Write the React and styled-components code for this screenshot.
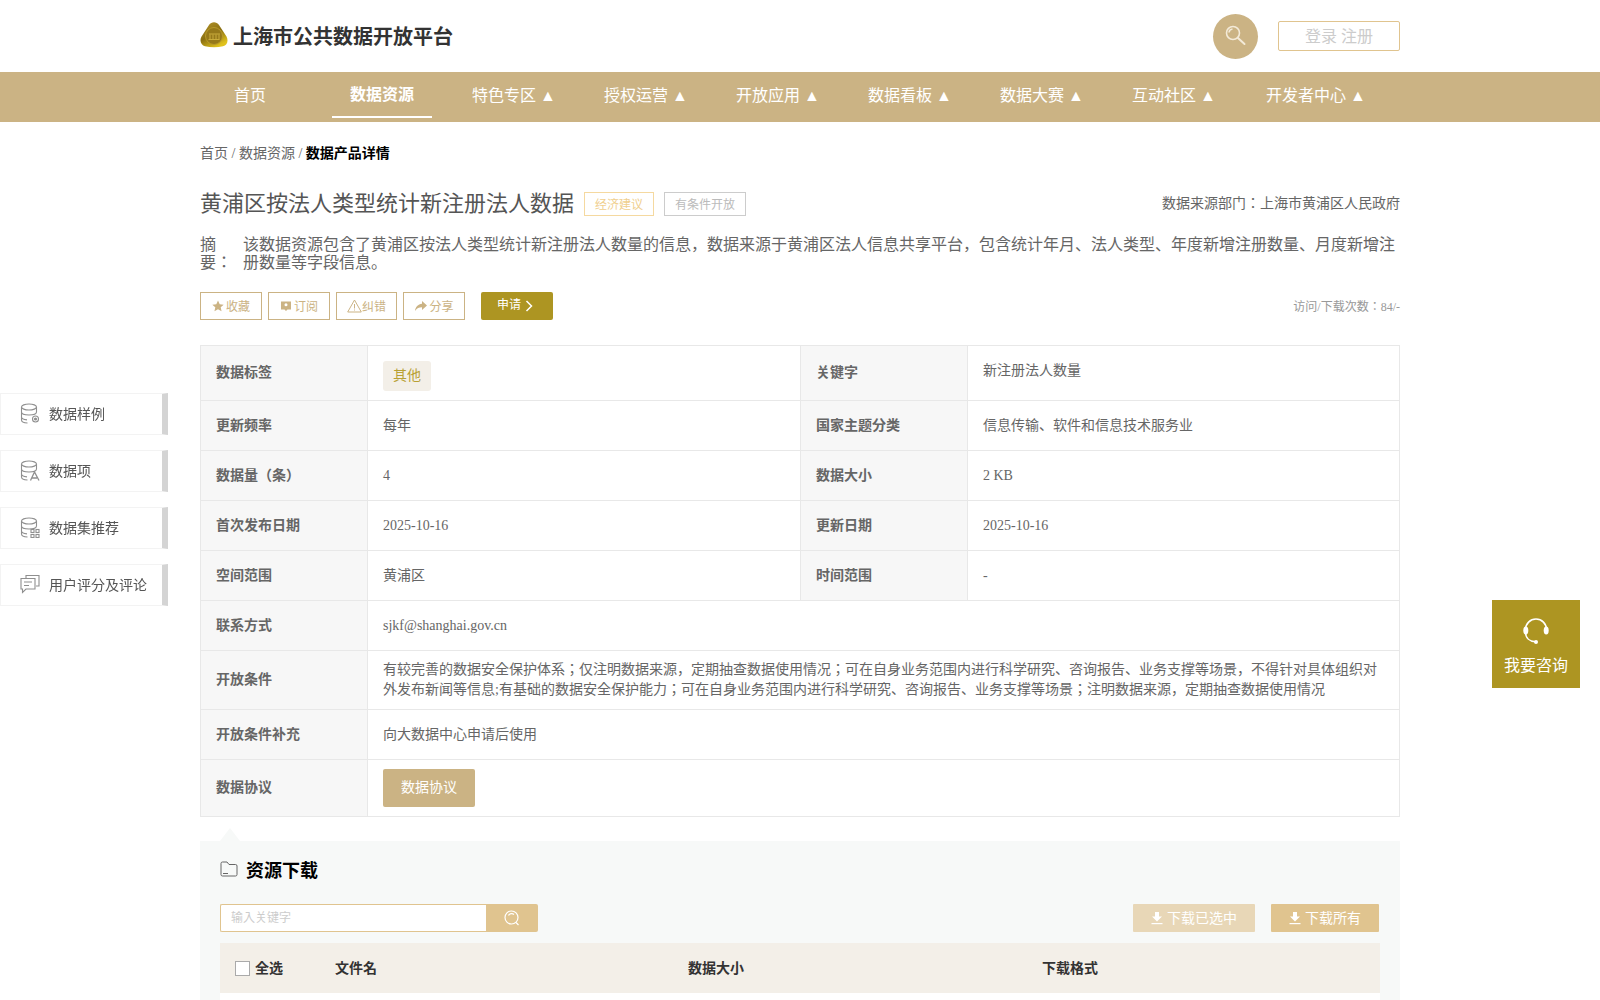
import React from "react";
import styled, { createGlobalStyle } from "styled-components";

const GlobalStyle = createGlobalStyle`
  html, body {
    margin: 0;
    padding: 0;
    background: #fff;
    overflow: hidden;
    height: 1000px;
    font-family: "Liberation Serif", "Noto Sans CJK JP", serif;
  }
  * { box-sizing: border-box; }
`;

const Container = styled.div`
  width: 1200px;
  margin: 0 auto;
`;

const TopBar = styled(Container)`
  height: 72px;
  display: flex;
  align-items: center;
  justify-content: space-between;
`;

const Brand = styled.div`
  padding-bottom: 2px;
  display: flex;
  align-items: center;
  gap: 5px;
  font-size: 20px;
  font-weight: bold;
  color: #333;
`;

const TopRight = styled.div`
  display: flex;
  align-items: center;
  gap: 20px;
`;

const SearchCircle = styled.div`
  width: 45px;
  height: 45px;
  border-radius: 50%;
  background: #cbb384;
  display: flex;
  align-items: center;
  justify-content: center;
`;

const LoginBox = styled.div`
  width: 122px;
  height: 30px;
  border: 1px solid #e0c48f;
  border-radius: 2px;
  font-size: 16px;
  line-height: 29px;
  text-align: center;
  color: #ccc;
`;

const NavBar = styled.div`
  height: 50px;
  background: #cbb384;
`;

const NavList = styled(Container)`
  display: flex;
  gap: 32px;
`;

const NavItem = styled.div`
  min-width: 100px;
  height: 46px;
  margin-left: ${(p) => (p.$last ? "10px" : "0")};
  font-size: 16px;
  line-height: ${(p) => (p.$active ? "45px" : "48px")};
  font-weight: ${(p) => (p.$active ? "bold" : "normal")};
  text-align: center;
  color: #fff;
  border-bottom: ${(p) => (p.$active ? "2px solid #fff" : "none")};
`;

const Breadcrumb = styled.div`
  margin-top: 22px;
  font-size: 14px;
  line-height: 20px;
  color: #666;

  b {
    color: #000;
  }
`;

const TitleRow = styled.div`
  margin-top: 24px;
  height: 30px;
  display: flex;
  align-items: center;
`;

const Title = styled.h1`
  margin: 0;
  padding-bottom: 4px;
  font-size: 22px;
  font-weight: normal;
  color: #555;
`;

const Tag = styled.span`
  height: 24px;
  margin: 2px 0 0 10px;
  padding: 0 10px;
  border: 1px solid ${(p) => (p.$first ? "#f5d9a0" : "#ccc")};
  color: ${(p) => (p.$first ? "#f0cf8f" : "#bbb")};
  font-size: 12px;
  line-height: 24px;
`;

const Source = styled.div`
  margin-left: auto;
  padding-bottom: 2px;
  font-size: 14px;
  color: #666;
`;

const Abstract = styled.div`
  margin-top: 18px;
  display: flex;
  font-size: 16px;
  line-height: 18px;
  color: #666;
`;

const AbstractLabel = styled.div`
  width: 32px;
  margin-right: 11px;
  flex: none;
`;

const ActionRow = styled.div`
  margin-top: 20px;
  display: flex;
  align-items: center;
  gap: 6px;
`;

const ActionButton = styled.div`
  width: ${(p) => p.$w}px;
  height: 28px;
  border: 1px solid #cbb384;
  color: #cbb384;
  font-size: 12px;
  display: flex;
  align-items: center;
  justify-content: center;
  gap: ${(p) => p.$gap}px;
`;

const ApplyButton = styled.div`
  width: 72px;
  height: 28px;
  margin-left: 10px;
  padding: 0 0 4px 16px;
  border-radius: 2px;
  background: #ad9522;
  color: #fff;
  font-size: 12px;
  display: flex;
  align-items: center;
  gap: 4px;
`;

const VisitCount = styled.div`
  margin-left: auto;
  font-size: 12px;
  color: #999;
`;

const InfoTable = styled.table`
  width: 1199px;
  margin-top: 25px;
  table-layout: fixed;
  border-collapse: collapse;
  font-size: 14px;
  color: #666;
`;

const Row = styled.tr`
  height: ${(p) => p.$h || 50}px;
`;

const LabelCell = styled.td`
  width: 167px;
  padding: 0 15px;
  background: #f7f7f7;
  border: 1px solid #e8e8e8;
  font-weight: bold;
  line-height: 20px;
`;

const ValueCell = styled.td`
  width: ${(p) => p.$w || 433}px;
  padding: 0 15px;
  border: 1px solid #e8e8e8;
  line-height: 20px;
`;

const KeywordText = styled.div`
  margin-top: -5px;
`;

const TagChip = styled.span`
  display: block;
  width: 48px;
  height: 30px;
  margin-top: 6px;
  border-radius: 3px;
  background: #f3efe8;
  color: #b8a135;
  text-align: center;
  line-height: 30px;
`;

const AgreementButton = styled.div`
  width: 92px;
  height: 38px;
  border-radius: 2px;
  background: #cbb384;
  color: #fff;
  text-align: center;
  line-height: 38px;
`;

const Panel = styled.div`
  position: relative;
  margin-top: 24px;
  height: 400px;
  padding: 14px 20px 0;
  background: #f7f9f8;

  &::before {
    content: "";
    position: absolute;
    top: -13px;
    left: 20px;
    border-left: 10px solid transparent;
    border-right: 10px solid transparent;
    border-bottom: 13px solid #f7f9f8;
  }
`;

const PanelTitle = styled.div`
  height: 30px;
  padding-bottom: 2px;
  display: flex;
  align-items: center;
  gap: 8px;
  font-size: 18px;
  font-weight: bold;
  color: #000;
`;

const ToolRow = styled.div`
  margin-top: 19px;
  display: flex;
  align-items: center;
`;

const SearchInput = styled.div`
  width: 266px;
  height: 28px;
  padding-left: 10px;
  background: #fff;
  border: 1px solid #e0c48f;
  border-right: none;
  border-radius: 2px 0 0 2px;
  color: #ccc;
  font-size: 12px;
  line-height: 27px;
`;

const SearchButton = styled.div`
  width: 52px;
  height: 28px;
  background: #e0c48f;
  border-radius: 0 2px 2px 0;
  display: flex;
  align-items: center;
  justify-content: center;
`;

const DownloadButton = styled.div`
  width: ${(p) => (p.$muted ? "122px" : "108px")};
  height: 28px;
  margin-left: ${(p) => (p.$muted ? "auto" : "16px")};
  margin-right: ${(p) => (p.$muted ? "0" : "1px")};
  padding-bottom: 2px;
  background: ${(p) => (p.$muted ? "#e8d7b7" : "#e0c48f")};
  border-radius: 1px;
  color: #fff;
  font-size: 14px;
  display: flex;
  align-items: center;
  justify-content: center;
  gap: 4px;
`;

const FileHead = styled.div`
  height: 50px;
  margin-top: 11px;
  padding-bottom: 3px;
  background: #f3efe8;
  display: grid;
  grid-template-columns: 115px 353px 354px 1fr;
  align-items: center;
  font-size: 14px;
  font-weight: bold;
  color: #333;
`;

const SelectAll = styled.div`
  padding-left: 15px;
  display: flex;
  align-items: center;
  gap: 5px;
`;

const CheckBox = styled.span`
  width: 15px;
  height: 15px;
  margin-top: 3px;
  background: #fff;
  border: 1px solid #aaa;
`;

const FileBody = styled.div`
  height: 50px;
  background: #fff;
`;

const SideNav = styled.div`
  position: fixed;
  left: 0;
  top: 393px;
  display: flex;
  flex-direction: column;
  gap: 15px;
`;

const SideItem = styled.div`
  width: 168px;
  height: 42px;
  padding: 0 0 2px 19px;
  background: #fff;
  border: 1px solid #f3f3f3;
  border-right: 6px solid #d4d4d4;
  display: flex;
  align-items: center;
  gap: 9px;
  font-size: 14px;
  color: #555;
`;

const ConsultBox = styled.div`
  position: fixed;
  left: 1492px;
  top: 600px;
  width: 88px;
  height: 88px;
  padding-top: 17px;
  background: #ad9522;
  color: #fff;
  font-size: 16px;
  display: flex;
  flex-direction: column;
  align-items: center;
  gap: 7px;
`;

const Logo = () => (
  <svg width="28" height="26" viewBox="0 0 28 26">
    <defs>
      <linearGradient id="gold" x1="0" y1="0" x2="0.6" y2="1">
        <stop offset="0" stopColor="#b8982c" />
        <stop offset="0.55" stopColor="#8a6f12" />
        <stop offset="1" stopColor="#e0c21c" />
      </linearGradient>
    </defs>
    <path d="M9 3C11.500 -.6 16.500 -.6 19 3L26.500 14.500C28.800 19 27 23.500 23 24.300C17 25.500 11 25.500 5 24.300C1.200 23.500 -.8 19 1.400 14.800Z" fill="url(#gold)" />
    <circle cx="14" cy="14" r="8.500" fill="#96791a" stroke="#b89a2a" />
    <path d="M8.500 17.500h11M10 12.500v5M13 12.500v5M16 12.500v5M19 12.500v5M9 12h11" stroke="#c9ac3c" fill="none" />
  </svg>
);

const MagnifierIcon = () => (
  <svg width="21" height="21" viewBox="0 0 21 21" fill="none" stroke="#f3ead8" strokeWidth="1.600" style={{ marginTop: -1 }}>
    <circle cx="8" cy="8" r="6.500" />
    <path d="M4 7.500A4 4 0 0 1 7.500 4" />
    <path d="M13 13l6.500 6" strokeWidth="2" strokeLinecap="round" />
  </svg>
);

const StarIcon = () => (
  <svg width="12" height="12" viewBox="0 0 24 24" fill="#cbb384">
    <path d="M12 1l3.400 7.400 8 .9-6 5.400 1.700 8L12 18.600l-7.100 4.100 1.700-8-6-5.400 8-.9z" />
  </svg>
);

const BookmarkIcon = () => (
  <svg width="12" height="12" viewBox="0 0 12 12" fill="#cbb384">
    <path d="M1 1.500h10v8H7.500L6 11 4.500 9.500H1zM6 3.300a1.500 1.500 0 1 0 0 3 1.500 1.500 0 0 0 0-3z" fillRule="evenodd" />
  </svg>
);

const WarnIcon = () => (
  <svg width="15" height="14" viewBox="0 0 15 14" fill="none" stroke="#cbb384">
    <path d="M7.500 1L14.300 13H.7z" strokeLinejoin="round" />
    <path d="M7.500 5v4.500M7.500 10.500v1" />
  </svg>
);

const ShareIcon = () => (
  <svg width="13" height="12" viewBox="0 0 13 12" fill="#cbb384">
    <path d="M8 1l5 4.500L8 10V7.200C5 7.200 2.800 8.200 1 11c.4-4 3-6.800 7-7.200z" />
  </svg>
);

const ChevronIcon = () => (
  <svg width="8" height="12" viewBox="0 0 8 12" fill="none" stroke="#fff" strokeWidth="1.500" style={{ marginTop: 3 }}>
    <path d="M1.500 1l5 5-5 5" />
  </svg>
);

const DbBase = ({ children }) => (
  <svg width="20" height="21" viewBox="0 0 20 21" fill="none" stroke="#8f8f8f" strokeWidth="1.100">
    <ellipse cx="9" cy="4" rx="7.500" ry="3" />
    <path d="M1.500 4v13c0 1.600 2.500 2.800 6 3M1.500 9c0 1.700 3.400 3 7.500 3s7.500-1.300 7.500-3V4M1.500 14c0 1.400 2.300 2.500 5.500 2.900" />
    {children}
  </svg>
);

const FolderIcon = () => (
  <svg width="18" height="16" viewBox="0 0 18 16" fill="none" stroke="#666" strokeWidth="1">
    <path d="M1 13.500V2.500A1.500 1.500 0 0 1 2.500 1H7l2 2.500h6.500A1.500 1.500 0 0 1 17 5v8.500a1.500 1.500 0 0 1-1.500 1.500h-13A1.500 1.500 0 0 1 1 13.500z" />
    <path d="M3 12.500h5" />
  </svg>
);

const CommentIcon = () => (
  <svg width="20" height="20" viewBox="0 0 20 20" fill="none" stroke="#8f8f8f" strokeWidth="1.100">
    <path d="M6 4V1.500h13V12h-3" />
    <path d="M1 4.500h14V15H6l-3.500 3.500V15H1z" />
    <path d="M4 8h8M4 11.500h5" />
  </svg>
);

const RoundSearchIcon = () => (
  <svg width="16" height="16" viewBox="0 0 16 16" fill="none" stroke="#fff" strokeWidth="1.200">
    <circle cx="7.500" cy="7.500" r="6.500" />
    <path d="M4.500 5.500A3.500 3.500 0 0 1 10 4.500M12 12.500l2.500 2.500" />
  </svg>
);

const DownloadIcon = () => (
  <svg width="12" height="14" viewBox="0 0 12 14" fill="#fff" style={{ marginTop: 2 }}>
    <path d="M4 1h4v4.500h3L6 10.500 1 5.500h3z" />
    <rect x="0.500" y="12" width="11" height="1.200" />
  </svg>
);

const HeadsetIcon = () => (
  <svg width="28" height="28" viewBox="0 0 28 28" fill="none" stroke="#fff" strokeWidth="1.600">
    <path d="M3.500 12.500A10.500 10.500 0 0 1 24.500 12.500" />
    <path d="M3.500 15c0 6 4 9.500 10 9.800" />
    <ellipse cx="3.800" cy="13.500" rx="2.500" ry="4" fill="#fff" stroke="none" />
    <ellipse cx="24.200" cy="13.500" rx="2.500" ry="4" fill="#fff" stroke="none" />
    <circle cx="14" cy="25" r="2" fill="#fff" stroke="none" />
  </svg>
);

const navItems = ["首页", "数据资源", "特色专区 ▲", "授权运营 ▲", "开放应用 ▲", "数据看板 ▲", "数据大赛 ▲", "互动社区 ▲", "开发者中心 ▲"];

const sideItems = [
  {
    text: "数据样例",
    icon: (
      <DbBase>
        <circle cx="15.500" cy="16" r="3" />
        <circle cx="15.500" cy="16" r="1" fill="#8f8f8f" />
      </DbBase>
    ),
  },
  {
    text: "数据项",
    icon: (
      <DbBase>
        <path d="M10.500 20.500L14.500 12l4.500 8.500M12 18h5" strokeWidth="1.300" />
      </DbBase>
    ),
  },
  {
    text: "数据集推荐",
    icon: (
      <DbBase>
        <rect x="11" y="12.500" width="3" height="3" />
        <rect x="16" y="12.500" width="3" height="3" />
        <rect x="11" y="17.500" width="3" height="3" />
        <rect x="16" y="17.500" width="3" height="3" />
      </DbBase>
    ),
  },
  { text: "用户评分及评论", icon: <CommentIcon /> },
];

const actions = [
  { text: "收藏", icon: <StarIcon />, w: 62, gap: 2 },
  { text: "订阅", icon: <BookmarkIcon />, w: 62, gap: 2 },
  { text: "纠错", icon: <WarnIcon />, w: 61, gap: 0 },
  { text: "分享", icon: <ShareIcon />, w: 62, gap: 2 },
];

const pairRows = [
  ["更新频率", "每年", "国家主题分类", "信息传输、软件和信息技术服务业"],
  ["数据量（条）", "4", "数据大小", "2 KB"],
  ["首次发布日期", "2025-10-16", "更新日期", "2025-10-16"],
  ["空间范围", "黄浦区", "时间范围", "-"],
];

export default function App() {
  return (
    <>
      <GlobalStyle />
      <TopBar>
        <Brand>
          <Logo />
          上海市公共数据开放平台
        </Brand>
        <TopRight>
          <SearchCircle>
            <MagnifierIcon />
          </SearchCircle>
          <LoginBox>登录 注册</LoginBox>
        </TopRight>
      </TopBar>
      <NavBar>
        <NavList>
          {navItems.map((item, i) => (
            <NavItem key={item} $active={i === 1} $last={i === navItems.length - 1}>
              {item}
            </NavItem>
          ))}
        </NavList>
      </NavBar>

      <Container>
        <Breadcrumb>
          首页 / 数据资源 / <b>数据产品详情</b>
        </Breadcrumb>
        <TitleRow>
          <Title>黄浦区按法人类型统计新注册法人数据</Title>
          <Tag $first>经济建议</Tag>
          <Tag>有条件开放</Tag>
          <Source>数据来源部门：上海市黄浦区人民政府</Source>
        </TitleRow>
        <Abstract>
          <AbstractLabel>摘要：</AbstractLabel>
          <div>
            该数据资源包含了黄浦区按法人类型统计新注册法人数量的信息，数据来源于黄浦区法人信息共享平台，包含统计年月、法人类型、年度新增注册数量、月度新增注册数量等字段信息。
          </div>
        </Abstract>
        <ActionRow>
          {actions.map((a) => (
            <ActionButton key={a.text} $w={a.w} $gap={a.gap}>
              {a.icon}
              {a.text}
            </ActionButton>
          ))}
          <ApplyButton>
            申请
            <ChevronIcon />
          </ApplyButton>
          <VisitCount>访问/下载次数：84/-</VisitCount>
        </ActionRow>

        <InfoTable>
          <colgroup>
            <col width="167" />
            <col width="433" />
            <col width="167" />
            <col width="432" />
          </colgroup>
          <tbody>
            <Row $h={55}>
              <LabelCell>数据标签</LabelCell>
              <ValueCell>
                <TagChip>其他</TagChip>
              </ValueCell>
              <LabelCell>关键字</LabelCell>
              <ValueCell $w={432}>
                <KeywordText>新注册法人数量</KeywordText>
              </ValueCell>
            </Row>
            {pairRows.map((r) => (
              <Row key={r[0]}>
                <LabelCell>{r[0]}</LabelCell>
                <ValueCell>{r[1]}</ValueCell>
                <LabelCell>{r[2]}</LabelCell>
                <ValueCell $w={432}>{r[3]}</ValueCell>
              </Row>
            ))}
            <Row>
              <LabelCell>联系方式</LabelCell>
              <ValueCell colSpan={3}>sjkf@shanghai.gov.cn</ValueCell>
            </Row>
            <Row $h={59}>
              <LabelCell>开放条件</LabelCell>
              <ValueCell colSpan={3}>
                有较完善的数据安全保护体系；仅注明数据来源，定期抽查数据使用情况；可在自身业务范围内进行科学研究、咨询报告、业务支撑等场景，不得针对具体组织对外发布新闻等信息;有基础的数据安全保护能力；可在自身业务范围内进行科学研究、咨询报告、业务支撑等场景；注明数据来源，定期抽查数据使用情况
              </ValueCell>
            </Row>
            <Row>
              <LabelCell>开放条件补充</LabelCell>
              <ValueCell colSpan={3}>向大数据中心申请后使用</ValueCell>
            </Row>
            <Row $h={57}>
              <LabelCell>数据协议</LabelCell>
              <ValueCell colSpan={3}>
                <AgreementButton>数据协议</AgreementButton>
              </ValueCell>
            </Row>
          </tbody>
        </InfoTable>

        <Panel>
          <PanelTitle>
            <FolderIcon />
            资源下载
          </PanelTitle>
          <ToolRow>
            <SearchInput>输入关键字</SearchInput>
            <SearchButton>
              <RoundSearchIcon />
            </SearchButton>
            <DownloadButton $muted>
              <DownloadIcon />
              下载已选中
            </DownloadButton>
            <DownloadButton>
              <DownloadIcon />
              下载所有
            </DownloadButton>
          </ToolRow>
          <FileHead>
            <SelectAll>
              <CheckBox />
              全选
            </SelectAll>
            <div>文件名</div>
            <div>数据大小</div>
            <div>下载格式</div>
          </FileHead>
          <FileBody />
        </Panel>
      </Container>

      <SideNav>
        {sideItems.map((s) => (
          <SideItem key={s.text}>
            {s.icon}
            {s.text}
          </SideItem>
        ))}
      </SideNav>

      <ConsultBox>
        <HeadsetIcon />
        我要咨询
      </ConsultBox>
    </>
  );
}
